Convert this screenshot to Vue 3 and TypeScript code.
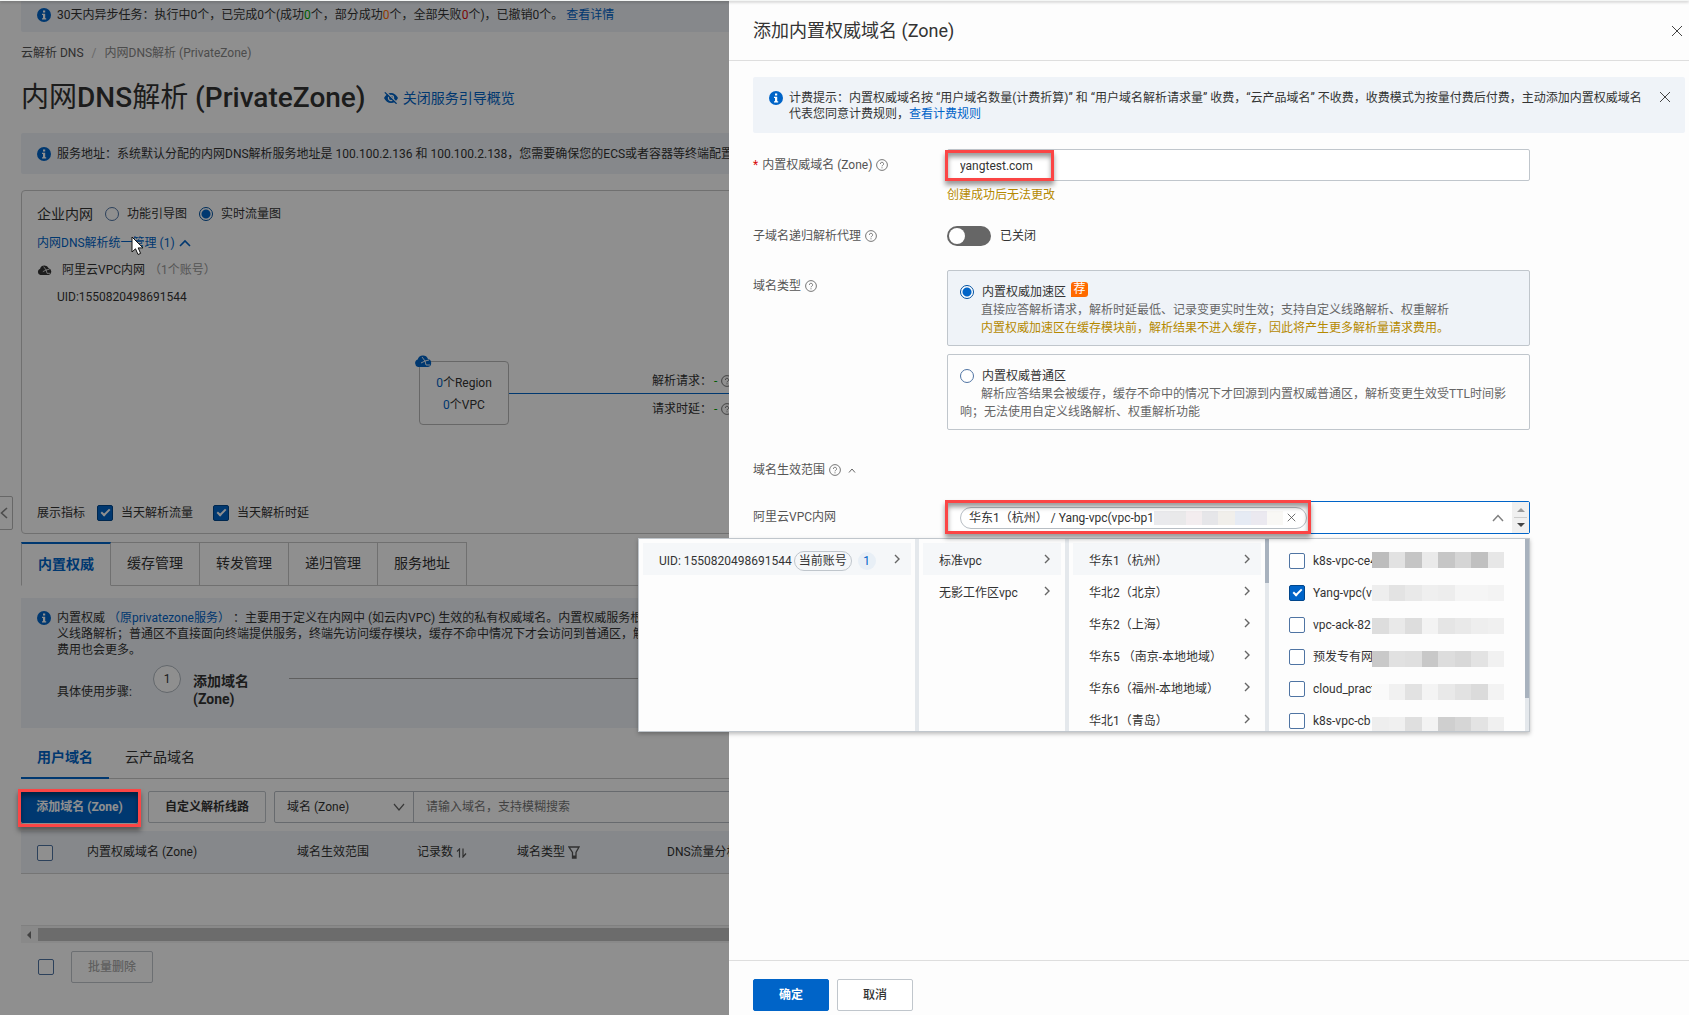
<script setup lang="ts">
import { ref } from 'vue'

interface Region { name: string; active?: boolean }
interface Vpc { name: string; checked: boolean }

const zone = ref('yangtest.com')
const recursion = ref(false)
const zoneType = ref('fast')
const view = ref('flow')
const keyword = ref('')

const mainTabs = ['内置权威', '缓存管理', '转发管理', '递归管理', '服务地址']

const regions: Region[] = [
  { name: '华东1（杭州）', active: true },
  { name: '华北2（北京）' },
  { name: '华东2（上海）' },
  { name: '华东5 （南京-本地地域）' },
  { name: '华东6（福州-本地地域）' },
  { name: '华北1（青岛）' },
]

const vpcs = ref<Vpc[]>([
  { name: 'k8s-vpc-ce4', checked: false },
  { name: 'Yang-vpc(v', checked: true },
  { name: 'vpc-ack-82', checked: false },
  { name: '预发专有网', checked: false },
  { name: 'cloud_pract', checked: false },
  { name: 'k8s-vpc-cb', checked: false },
])

const listMosaic = [
  ['#bdbdbd', '#e2e2e2', '#c5c5c5', '#eaeaea', '#c6c6c6', '#d5d5d5', '#c0c0c0', '#e7e7e7'],
  ['#eeeeee', '#e3e3e3', '#e9e9e9', '#efefef', '#ededed', '#f5f5f5', '#f5f5f5', '#f3f3f3'],
  ['#dddddd', '#e9e9e9', '#dddddd', '#f3f3f3', '#e5e5e5', '#e9e9e9', '#eeeeee', '#f0f0f0'],
  ['#c9c9c9', '#e1e1e1', '#dfdfdf', '#c8c8c8', '#dddddd', '#d8d8d8', '#e3e3e3', '#f1f1f1'],
  ['#fafafa', '#f1f1f1', '#e2e2e2', '#f4f4f4', '#e9e9e9', '#e2e2e2', '#dbdbdb', '#f3f3f3'],
  ['#eeeeee', '#f0f0f0', '#dfdfdf', '#f3f3f3', '#cfcfcf', '#d6d6d6', '#e3e3e3', '#f0f0f0'],
]
const tagMosaic = ['#eaeaed', '#e9e9ea', '#f3edef', '#e6e6e9', '#f1efeb', '#e6ebf4', '#ebe9f0', '#f9f8f5']
</script>

<template>
  <div class="app" lang="zh-CN">
    <main class="page">
      <div class="notice notice-task">
        <svg class="info" viewBox="0 0 14 14"><circle cx="7" cy="7" r="7" /><path d="M6 2.5h2.2v2H6zM5 5.8h3.2v4.4h1v1.3H5v-1.3h1V7.1H5z" fill="#fff" /></svg>
        <p>30天内异步任务：执行中0个，已完成0个(成功<b class="ok">0</b>个，部分成功<b class="warn">0</b>个，全部失败<b class="bad">0</b>个)，已撤销0个。 <a href="#">查看详情</a></p>
      </div>

      <nav class="crumbs"><a href="#">云解析 DNS</a><i>/</i><span>内网DNS解析 (PrivateZone)</span></nav>

      <header class="heading">
        <h1>内网<span>DNS</span>解析 <span>(PrivateZone)</span></h1>
        <a href="#" class="guide">
          <svg viewBox="0 0 14 12" width="14" height="12"><path d="M0 6C1.500 3 4 1 7 1S12.500 3 14 6c-1.500 3-4 5-7 5S1.500 9 0 6z" fill="#0064c8" /><circle cx="7" cy="6" r="2.600" fill="none" stroke="#fff" stroke-width="1.200" /><path d="M2.200 0l11 11" stroke="#fff" stroke-width="1.400" /><path d="M.8.400l11.800 11.400" stroke="#0064c8" stroke-width="1.300" /></svg>
          关闭服务引导概览
        </a>
      </header>

      <div class="notice notice-address">
        <svg class="info" viewBox="0 0 14 14"><circle cx="7" cy="7" r="7" /><path d="M6 2.5h2.2v2H6zM5 5.8h3.2v4.4h1v1.3H5v-1.3h1V7.1H5z" fill="#fff" /></svg>
        <p>服务地址：系统默认分配的内网DNS解析服务地址是 100.100.2.136 和 100.100.2.138，您需要确保您的ECS或者容器等终端配置的DNS</p>
      </div>

      <section class="card">
        <div class="card-top">
          <h2>企业内网</h2>
          <label><input v-model="view" type="radio" name="view" value="guide" />功能引导图</label>
          <label><input v-model="view" type="radio" name="view" value="flow" />实时流量图</label>
        </div>
        <div class="card-row">
          <a href="#" class="manage">内网DNS解析统一管理 (1)
            <svg viewBox="0 0 12 8" width="12" height="8"><path d="M1 7l5-5 5 5" fill="none" stroke="#0064c8" stroke-width="1.600" /></svg>
          </a>
          <svg class="cursor" viewBox="0 0 13 20" width="13" height="20"><path d="M1 1v15l3.500-3.200L7 18.500l2.600-1.100-2.400-5.500H12z" fill="#fff" stroke="#111" /></svg>
        </div>
        <div class="card-row vpc">
          <svg viewBox="0 0 18 12" width="15" height="10"><path d="M4 12a4 4 0 0 1-.3-7.600A5.500 5.500 0 0 1 14 4a4.100 4.100 0 0 1 0 8z" fill="#333" /><path d="M8 2l3 4 4-1M11 6l1 4 4 0M11 6L7 8" fill="none" stroke="#fff" stroke-width=".9" /></svg>
          <span>阿里云VPC内网</span><span class="muted">（1个账号）</span>
        </div>
        <div class="card-row uid">UID:1550820498691544</div>

        <div class="node">
          <svg viewBox="0 0 18 12" width="18" height="12"><path d="M4 12a4 4 0 0 1-.3-7.600A5.500 5.500 0 0 1 14 4a4.100 4.100 0 0 1 0 8z" fill="#0064c8" /><path d="M8 2l3 4 4-1M11 6l1 4 4 0M11 6L7 8" fill="none" stroke="#fff" stroke-width=".9" /></svg>
          <span><a href="#">0</a>个Region</span>
          <span><a href="#">0</a>个VPC</span>
        </div>
        <div class="edge">
          <span>解析请求：<em>-</em><svg class="help" viewBox="0 0 12 12"><circle cx="6" cy="6" r="5.400" /><path d="M4.400 4.900a1.600 1.600 0 1 1 2.300 1.400c-.5.300-.7.500-.7 1M6 8.300v1" /></svg></span>
          <span>请求时延：<em>-</em><svg class="help" viewBox="0 0 12 12"><circle cx="6" cy="6" r="5.400" /><path d="M4.400 4.900a1.600 1.600 0 1 1 2.300 1.400c-.5.300-.7.500-.7 1M6 8.300v1" /></svg></span>
        </div>

        <div class="metrics">
          <span>展示指标</span>
          <label><input type="checkbox" checked />当天解析流量</label>
          <label><input type="checkbox" checked />当天解析时延</label>
        </div>
      </section>

      <div class="tabs">
        <button v-for="(t, i) in mainTabs" :key="t" type="button" :class="{ on: i === 0 }">{{ t }}</button>
        <span class="tabs-fill"></span>
      </div>

      <section class="intro">
        <svg class="info" viewBox="0 0 14 14"><circle cx="7" cy="7" r="7" /><path d="M6 2.5h2.2v2H6zM5 5.8h3.2v4.4h1v1.3H5v-1.3h1V7.1H5z" fill="#fff" /></svg>
        <div class="intro-body">
          <p>内置权威 <a href="#">（原privatezone服务）</a> ：主要用于定义在内网中 (如云内VPC) 生效的私有权威域名。内置权威服务根据</p>
          <p>义线路解析；普通区不直接面向终端提供服务，终端先访问缓存模块，缓存不命中情况下才会访问到普通区，解析</p>
          <p>费用也会更多。</p>
          <div class="steps">
            <span class="steps-label">具体使用步骤:</span>
            <span class="step-no">1</span>
            <strong>添加域名<br />(Zone)</strong>
            <i class="step-line"></i>
          </div>
        </div>
      </section>

      <div class="subtabs">
        <button type="button" class="on">用户域名</button>
        <button type="button">云产品域名</button>
      </div>

      <div class="toolbar">
        <div class="add">
          <button type="button" class="btn primary">添加域名 (Zone)</button>
          <i class="frame frame-add"></i>
        </div>
        <button type="button" class="btn custom">自定义解析线路</button>
        <div class="search">
          <div class="select-wrap">
            <select aria-label="搜索字段"><option>域名 (Zone)</option></select>
            <svg viewBox="0 0 12 8" width="12" height="8"><path d="M1 1l5 6 5-6" fill="none" stroke="#666" stroke-width="1.200" /></svg>
          </div>
          <input v-model="keyword" type="text" aria-label="搜索域名" placeholder="请输入域名，支持模糊搜索" />
        </div>
      </div>

      <table>
        <colgroup><col class="c1" /><col class="c2" /><col class="c3" /><col class="c4" /><col class="c5" /><col /></colgroup>
        <thead>
          <tr>
            <th><input type="checkbox" aria-label="全选" /></th>
            <th>内置权威域名 (Zone)</th>
            <th>域名生效范围</th>
            <th>记录数 <svg viewBox="0 0 11 10" width="11" height="10"><path d="M1 3.500L3.500 1v8.500M7 .5V9l3-3.500" fill="none" stroke="#555" stroke-width="1.200" /></svg></th>
            <th>域名类型 <svg viewBox="0 0 12 13" width="12" height="13"><path d="M1 1h10L8 6.500V12H4.500V6.500z" fill="none" stroke="#555" stroke-width="1.300" /><path d="M4.500 9.500H8V12H4.500z" fill="#555" /></svg></th>
            <th>DNS流量分析</th>
          </tr>
        </thead>
        <tbody><tr><td colspan="6"></td></tr></tbody>
      </table>
      <div class="hscroll"><i></i><b></b></div>

      <div class="batch">
        <input type="checkbox" aria-label="选择本页" />
        <button type="button" class="btn" disabled>批量删除</button>
      </div>

      <button type="button" class="collapse" aria-label="收起导航">
        <svg viewBox="0 0 8 12" width="8" height="12"><path d="M7 1L1.500 6 7 11" fill="none" stroke="#888" stroke-width="1.600" /></svg>
      </button>
    </main>

    <div class="mask"></div>

    <aside class="drawer">
      <header class="drawer-head">
        <h2>添加内置权威域名 (Zone)</h2>
        <button type="button" class="x" aria-label="关闭"><svg viewBox="0 0 12 12" width="12" height="12"><path d="M1 1l10 10M11 1L1 11" /></svg></button>
      </header>

      <div class="drawer-body">
        <div class="tip">
          <svg class="info" viewBox="0 0 14 14"><circle cx="7" cy="7" r="7" /><path d="M6 2.5h2.2v2H6zM5 5.8h3.2v4.4h1v1.3H5v-1.3h1V7.1H5z" fill="#fff" /></svg>
          <p>计费提示：内置权威域名按 “用户域名数量(计费折算)” 和 “用户域名解析请求量” 收费，“云产品域名” 不收费，收费模式为按量付费后付费，主动添加内置权威域名<wbr />代表您同意计费规则，<a href="#">查看计费规则</a></p>
          <button type="button" class="x" aria-label="关闭提示"><svg viewBox="0 0 12 12" width="12" height="12"><path d="M1 1l10 10M11 1L1 11" /></svg></button>
        </div>

        <div class="field field-zone">
          <label for="zone"><b class="req">*</b>内置权威域名 (Zone)<svg class="help" viewBox="0 0 12 12"><circle cx="6" cy="6" r="5.400" /><path d="M4.400 4.900a1.600 1.600 0 1 1 2.300 1.400c-.5.300-.7.500-.7 1M6 8.300v1" /></svg></label>
          <div class="control">
            <input id="zone" v-model="zone" type="text" class="text" />
            <i class="frame frame-zone"></i>
            <p class="hint">创建成功后无法更改</p>
          </div>
        </div>

        <div class="field field-switch">
          <label for="recursion">子域名递归解析代理<svg class="help" viewBox="0 0 12 12"><circle cx="6" cy="6" r="5.400" /><path d="M4.400 4.900a1.600 1.600 0 1 1 2.300 1.400c-.5.300-.7.500-.7 1M6 8.300v1" /></svg></label>
          <div class="control switch-row">
            <input id="recursion" v-model="recursion" type="checkbox" role="switch" class="switch" />
            <span>{{ recursion ? '已开启' : '已关闭' }}</span>
          </div>
        </div>

        <div class="field field-type">
          <span class="label">域名类型<svg class="help" viewBox="0 0 12 12"><circle cx="6" cy="6" r="5.400" /><path d="M4.400 4.900a1.600 1.600 0 1 1 2.300 1.400c-.5.300-.7.500-.7 1M6 8.300v1" /></svg></span>
          <div class="control options">
            <div class="option" :class="{ on: zoneType === 'fast' }">
              <label><input v-model="zoneType" type="radio" name="type" value="fast" />内置权威加速区<span class="badge">荐</span></label>
              <p>直接应答解析请求，解析时延最低、记录变更实时生效；支持自定义线路解析、权重解析</p>
              <p class="gold">内置权威加速区在缓存模块前，解析结果不进入缓存，因此将产生更多解析量请求费用。</p>
            </div>
            <div class="option" :class="{ on: zoneType === 'normal' }">
              <label><input v-model="zoneType" type="radio" name="type" value="normal" />内置权威普通区</label>
              <p>解析应答结果会被缓存，缓存不命中的情况下才回源到内置权威普通区，解析变更生效受TTL时间影响；无法使用自定义线路解析、权重解析功能</p>
            </div>
          </div>
        </div>

        <div class="scope">
          域名生效范围<svg class="help" viewBox="0 0 12 12"><circle cx="6" cy="6" r="5.400" /><path d="M4.400 4.900a1.600 1.600 0 1 1 2.300 1.400c-.5.300-.7.500-.7 1M6 8.300v1" /></svg>
          <svg class="fold" viewBox="0 0 8 5" width="8" height="5"><path d="M1 4.500l3-3.500 3 3.500" fill="none" stroke="#666" /></svg>
        </div>

        <div class="field field-vpc">
          <span class="label">阿里云VPC内网</span>
          <div class="control">
            <div class="picker">
              <span class="tag">
                华东1（杭州） / Yang-vpc(vpc-bp1
                <span class="tag-mosaic"><i v-for="(c, i) in tagMosaic" :key="i" :style="{ background: c }"></i></span>
                <button type="button" class="x" aria-label="移除"><svg viewBox="0 0 12 12" width="9" height="9"><path d="M1 1l10 10M11 1L1 11" /></svg></button>
              </span>
              <button type="button" class="toggle" aria-label="收起列表"><svg viewBox="0 0 12 8" width="12" height="8"><path d="M1 7l5-5.500L11 7" fill="none" stroke="#808080" stroke-width="1.500" /></svg></button>
              <span class="spin"><i class="up"></i><i class="down"></i></span>
            </div>
            <i class="frame frame-vpc"></i>

            <div class="cascader">
              <ul class="col col-account">
                <li class="on">UID: 1550820498691544<span class="pill">当前账号</span><span class="count">1</span>
                  <svg class="arrow" viewBox="0 0 6 10"><path d="M1 1l4 4-4 4" /></svg></li>
              </ul>
              <ul class="col col-kind">
                <li class="on">标准vpc<svg class="arrow" viewBox="0 0 6 10"><path d="M1 1l4 4-4 4" /></svg></li>
                <li>无影工作区vpc<svg class="arrow" viewBox="0 0 6 10"><path d="M1 1l4 4-4 4" /></svg></li>
              </ul>
              <ul class="col col-region">
                <li v-for="r in regions" :key="r.name" :class="{ on: r.active }">{{ r.name }}<svg class="arrow" viewBox="0 0 6 10"><path d="M1 1l4 4-4 4" /></svg></li>
              </ul>
              <div class="col col-vpc">
                <ul>
                  <li v-for="v in vpcs" :key="v.name"><label><input v-model="v.checked" type="checkbox" /><span>{{ v.name }}</span></label></li>
                </ul>
                <div class="mosaic">
                  <div v-for="(row, i) in listMosaic" :key="i"><i v-for="(c, j) in row" :key="j" :style="{ background: c }"></i></div>
                </div>
              </div>
            </div>
          </div>
        </div>
      </div>

      <footer class="drawer-foot">
        <button type="button" class="btn primary">确定</button>
        <button type="button" class="btn">取消</button>
      </footer>
    </aside>

    <div class="topline"></div>
  </div>
</template>

<style>
body { margin: 0; overflow: hidden; }
</style>

<style scoped>
.app { position: relative; height: 100vh; overflow: hidden; font: 12px/18px Roboto, "Noto Sans CJK SC", sans-serif; color: #333; background: #fff; }
.app *, .app *::before, .app *::after { box-sizing: border-box; }
p, h1, h2, ul { margin: 0; padding: 0; }
ul { list-style: none; }
i, em { font-style: normal; }
a { color: #0064c8; text-decoration: none; }
button, input, select { font: inherit; color: inherit; margin: 0; }
button { padding: 0; background: none; border: 0; }
svg { flex: none; }
label { display: flex; align-items: center; }

input[type="checkbox"]:not(.switch) { appearance: none; flex: none; position: relative; width: 16px; height: 16px; border: 1px solid #4f74a3; border-radius: 2px; background: #fff; }
input[type="checkbox"]:not(.switch):checked { background: #0064c8; border-color: #00468c; }
input[type="checkbox"]:not(.switch):checked::after { content: ""; position: absolute; left: 3px; top: 3px; width: 9px; height: 5px; border: solid #fff; border-width: 0 0 2px 2px; transform: rotate(-45deg); }
input[type="radio"] { appearance: none; flex: none; width: 14px; height: 14px; border: 1px solid #4f74a3; border-radius: 50%; background: #fff; }
input[type="radio"]:checked { border-color: #0050a0; background: radial-gradient(circle, #0064c8 4px, #fff 5px); }

.info { width: 14px; height: 14px; fill: #0064c8; }
.help { width: 12px; height: 12px; margin-left: 4px; fill: none; stroke: #777; stroke-width: 1; vertical-align: -2px; }
.btn { height: 32px; padding: 0 16px; border: 1px solid #c0c6cc; border-radius: 2px; background: #fff; font-weight: 500; white-space: nowrap; }
.btn.primary { background: #0064c8; border-color: #0064c8; color: #fff; font-weight: 700; }
.frame { position: absolute; z-index: 20; border: 3px solid #fb4545; pointer-events: none; box-shadow: 0 4px 5px rgba(0, 0, 0, .4), inset 0 4px 5px rgba(0, 0, 0, .4); }

/* page behind the drawer */
.page { height: 100%; padding-left: 21px; overflow: hidden; white-space: nowrap; }
.notice { display: flex; align-items: center; gap: 6px; padding-left: 16px; background: #eff3f8; border-radius: 2px; }
.notice-task { height: 32px; padding-bottom: 3px; }
.notice-task b { font-weight: 400; }
.ok { color: #00a700; }
.warn { color: #ff6a00; }
.bad { color: #d90b0b; }
.notice-address { height: 41px; margin-bottom: 16px; }
.crumbs { display: flex; align-items: center; height: 42px; color: #888; }
.crumbs a { color: #555; }
.crumbs i { margin: 0 8px; color: #bbb; }
.heading { display: flex; align-items: center; gap: 18px; height: 48px; margin-bottom: 11px; }
h1 { font-size: 28px; line-height: 40px; font-weight: 400; }
h1 span { font-weight: 500; }
.guide { display: flex; align-items: center; gap: 5px; font-size: 14px; }

.card { position: relative; display: flex; flex-direction: column; height: 344px; margin-bottom: 8px; padding: 8px 15px 0; border: 1px solid #c8c8c8; border-radius: 4px; }
.card-top { display: flex; align-items: center; height: 30px; }
.card-top h2 { margin-right: 12px; font-size: 14px; font-weight: 400; }
.card-top label { gap: 8px; margin-right: 12px; }
.card-row { position: relative; display: flex; align-items: center; height: 27px; }
.manage svg { margin-left: 1px; }
.cursor { position: absolute; z-index: 20; left: 94px; top: 7px; }
.vpc span { margin-left: 10px; }
.vpc .muted { margin-left: 4px; color: #999; }
.uid { padding-left: 20px; }
.node { position: absolute; left: 397px; top: 170px; display: flex; flex-direction: column; align-items: center; width: 90px; height: 64px; padding-top: 10px; border: 1px solid #b8b8b8; border-radius: 4px; line-height: 22px; }
.node svg { position: absolute; left: -6px; top: -7px; }
.edge { position: absolute; left: 487px; right: 0; top: 176px; display: flex; flex-direction: column; padding-left: 143px; line-height: 28px; }
.edge::before { content: ""; position: absolute; left: 0; right: 0; top: 26px; height: 1px; background: #0064c8; }
.edge em { margin-left: 2px; color: #00a700; }
.metrics { display: flex; align-items: center; height: 40px; margin-top: auto; }
.metrics label { gap: 8px; margin-left: 12px; }
.metrics label + label { margin-left: 20px; }

.tabs { display: flex; height: 44px; margin-bottom: 12px; }
.tabs button { width: 89px; padding-bottom: 2px; border: solid #c8c8c8; border-width: 1px 1px 1px 0; font-size: 14px; }
.tabs .on { width: 90px; border-top: 2px solid #0064c8; border-left-width: 1px; border-bottom-color: transparent; color: #0064c8; font-weight: 700; }
.tabs-fill { flex: 1; border-bottom: 1px solid #c8c8c8; }

.intro { display: flex; gap: 6px; padding: 12px 0 20px 16px; background: #eff3f8; line-height: 16px; }
.intro .info { margin-top: 1px; }
.intro-body { flex: 1; min-width: 0; }
.steps { display: flex; align-items: flex-start; margin-top: 7px; line-height: 18px; }
.steps-label { width: 96px; padding-top: 18px; }
.step-no { width: 28px; height: 28px; margin-right: 12px; border: 1px solid #b0b8c0; border-radius: 50%; background: #fff; line-height: 26px; text-align: center; }
.steps strong { width: 96px; padding-top: 7px; font-size: 14px; }
.step-line { flex: 1; height: 1px; margin-top: 13px; background: #aaa; }

.subtabs { display: flex; height: 41px; margin: 10px 0 12px; box-shadow: inset 0 -1px #c8c8c8; font-size: 14px; }
.subtabs button { padding: 0 16px 2px; border-bottom: 2px solid transparent; }
.subtabs .on { border-color: #0064c8; color: #0064c8; font-weight: 700; }

.toolbar { display: flex; gap: 8px; margin-bottom: 8px; }
.add { position: relative; margin-right: 2px; }
.add .btn { width: 117px; padding: 0; }
.custom { font-weight: 700; }
.frame-add { inset: -2px -3px -4px; }
.search { display: flex; flex: 1; height: 32px; border: 1px solid #b8bec4; border-radius: 2px; }
.select-wrap { position: relative; width: 139px; border-right: 1px solid #b8bec4; }
.select-wrap select { appearance: none; width: 100%; height: 30px; padding: 0 12px; border: 0; background: transparent; }
.select-wrap svg { position: absolute; right: 8px; top: 11px; }
.search input { flex: 1; padding: 0 12px; border: 0; background: transparent; }
.search input::placeholder { color: #777; }

table { width: 100%; table-layout: fixed; border-collapse: collapse; }
.c1 { width: 50px; } .c2 { width: 210px; } .c3 { width: 120px; } .c4 { width: 100px; } .c5 { width: 150px; }
th { height: 42px; padding: 0 16px; background: #eff3f8; border-bottom: 1px solid #d0d0d0; font-weight: 400; text-align: left; }
th input, th svg { vertical-align: middle; }
td { height: 52px; padding: 0; }
.hscroll { display: flex; align-items: center; height: 18px; padding-left: 6px; background: #f4f4f4; border-top: 1px solid #e4e4e4; }
.hscroll i { width: 0; margin-right: 7px; border: solid transparent; border-width: 4px 4px 4px 0; border-right-color: #777; }
.hscroll b { flex: 1; height: 13px; background: #c1c1c1; }
.batch { display: flex; align-items: center; gap: 17px; margin: 8px 0 0 17px; }
.batch .btn { color: #aaa; }
.collapse { position: absolute; left: -1px; top: 496px; width: 14px; height: 34px; border: 1px solid #b8b8b8; border-radius: 0 2px 2px 0; background: #fff; }
.collapse svg { display: block; }

.mask { position: absolute; z-index: 10; inset: 0; background: rgba(0, 0, 0, .44); }
.topline { position: absolute; z-index: 40; left: 0; right: 0; top: 0; height: 1px; background: #f4f6f5; box-shadow: 0 1px 3px rgba(0, 0, 0, .4); }

/* drawer */
.drawer { position: absolute; z-index: 30; top: 0; right: 0; bottom: 0; display: flex; flex-direction: column; width: 960px; max-width: 100%; background: #fdfdfd; }
.drawer-head { display: flex; align-items: center; justify-content: space-between; height: 61px; padding: 2px 6px 0 24px; border-bottom: 1px solid #dedede; }
.drawer-head h2 { font-size: 18px; line-height: 26px; font-weight: 400; }
.x svg { display: block; fill: none; stroke: #444; stroke-width: 1; }
.drawer-body { flex: 1; padding: 16px 4px 0 24px; }
.tip { display: flex; align-items: flex-start; gap: 6px; height: 56px; margin-bottom: 16px; padding: 13px 14px 0 16px; background: #eff3f8; border-radius: 2px; line-height: 16px; }
.tip .info { margin-top: 1px; }
.tip p { flex: 1; }
.tip .x { margin: 1px 0 0 8px; }

.field { display: flex; align-items: flex-start; color: #555; }
.field > label, .field > .label { display: flex; align-items: center; flex: none; width: 194px; height: 32px; }
.req { margin-right: 4px; color: #d90b0b; font-weight: 400; }
.control { position: relative; flex: 0 1 583px; min-width: 0; color: #333; }
.text { display: block; width: 100%; height: 32px; padding: 1px 12px 0; border: 1px solid #c0c6cc; border-radius: 2px; background: #fff; }
.hint { margin-top: 5px; color: #b58900; }
.frame-zone { left: -2px; top: 1px; width: 109px; height: 31px; }
.field-zone { height: 71px; }
.field-switch { height: 50px; }
.switch-row { display: flex; align-items: center; gap: 9px; height: 32px; }
.switch { appearance: none; position: relative; width: 44px; height: 20px; border-radius: 10px; background: #666; }
.switch::before { content: ""; position: absolute; left: 2px; top: 2px; width: 16px; height: 16px; border-radius: 50%; background: #fff; }
.options { display: flex; flex-direction: column; gap: 8px; }
.option { padding: 12px 12px 8px; border: 1px solid #c0c6cc; border-radius: 2px; }
.option.on { background: #eff3f8; }
.option label { height: 18px; gap: 8px; }
.option p { text-indent: 21px; color: #666; }
.option .gold { color: #b58900; }
.badge { width: 17px; height: 15px; margin: -6px 0 0 -3px; border-radius: 3px 3px 3px 0; background: #ff6a00; color: #fff; line-height: 15px; text-align: center; }
.scope { display: flex; align-items: center; height: 32px; margin: 24px 0 15px; color: #555; }
.scope .fold { margin-left: 7px; }

.picker { display: flex; align-items: center; height: 33px; padding-left: 12px; border: 1px solid #0064c8; border-radius: 2px; background: #fff; }
.tag { display: flex; align-items: center; width: 347px; height: 22px; padding: 0 10px 0 8px; border: 1px solid #b8bec4; border-radius: 11px; white-space: nowrap; }
.tag-mosaic { display: flex; flex: 1; height: 14px; margin: 0 4px 0 0; }
.tag-mosaic i { flex: 1; }
.toggle { margin: 0 8px 0 auto; }
.toggle svg { display: block; }
.spin { display: flex; flex-direction: column; align-items: center; justify-content: space-around; width: 17px; height: 31px; background: linear-gradient(#ccc, #ccc) center / 13px 1px no-repeat #f0f0f0; }
.spin i { border: 4px solid transparent; }
.spin .up { border-top-width: 0; border-bottom-color: #999; }
.spin .down { border-bottom-width: 0; border-top-color: #444; }
.frame-vpc { left: -2px; top: -1px; width: 366px; height: 34px; }

.cascader { position: absolute; right: 0; top: 37px; display: flex; width: 892px; height: 194px; overflow: hidden; border: 1px solid #c0c6cc; background: #fdfdfd; box-shadow: 0 2px 4px rgba(0, 0, 0, .25); }
.col { position: relative; flex: none; padding: 4px 8px 0 4px; overflow: hidden; }
.col::after { content: ""; position: absolute; right: 0; top: 0; bottom: 0; width: 4px; background: #e4e8ec; }
.col-account { width: 280px; }
.col-kind { width: 150px; }
.col-region { width: 200px; }
.col-vpc { width: 260px; }
.col-region::after { background: linear-gradient(#a8b2be 44px, #e4e8ec 44px); }
.col-vpc::after { background: linear-gradient(#a8b2be 159px, #e4e8ec 159px); }
.col li { display: flex; align-items: center; height: 32px; padding: 4px 11px 0 16px; white-space: nowrap; }
.col .on { background: #f5f7f9; }
.arrow { width: 6px; height: 10px; margin: -4px 0 0 auto; fill: none; stroke: #666; stroke-width: 1.400; }
.pill { height: 20px; margin-left: 2px; padding: 0 4px; border: 1px solid #c0c6cc; border-radius: 10px; line-height: 18px; }
.count { width: 18px; height: 18px; margin-left: 6px; border-radius: 9px; background: #e8eff6; color: #0064c8; text-align: center; }
.col-vpc label { gap: 8px; }
.col-vpc input { margin-top: -1px; }
.mosaic { position: absolute; left: 103px; top: 13px; display: flex; flex-direction: column; gap: 17px; width: 132px; }
.mosaic div { display: flex; height: 16px; }
.mosaic i { flex: 1; }

.drawer-foot { display: flex; gap: 8px; padding: 18px 24px 4px; border-top: 1px solid #dedede; }
.drawer-foot .btn { width: 76px; }
</style>
